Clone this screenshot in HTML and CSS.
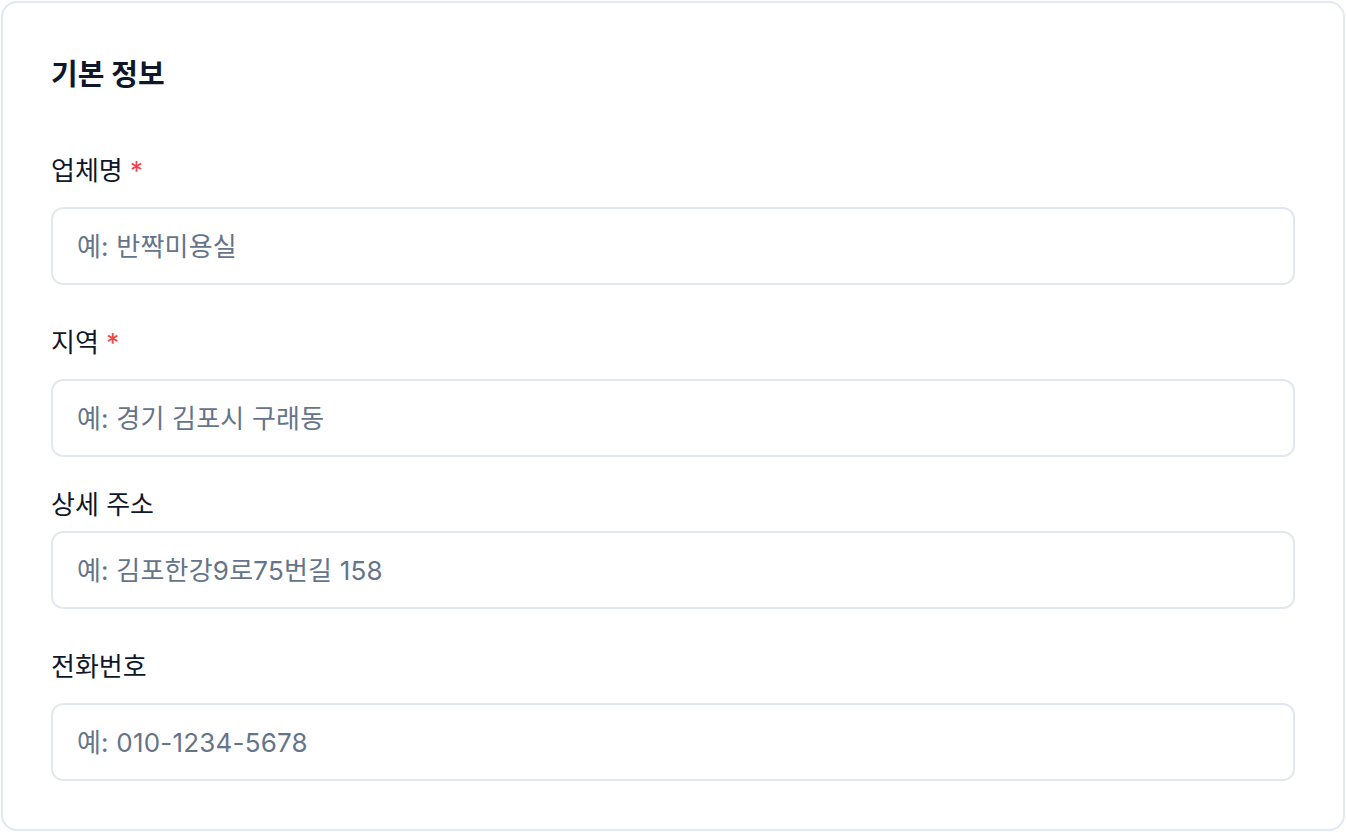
FILE: index.html
```html
<!DOCTYPE html>
<html lang="ko">
<head>
    <meta charset="UTF-8">
    <meta name="viewport" content="width=device-width, initial-scale=1.0">
    <title>기본 정보</title>
    <link rel="stylesheet" href="styles.css">
</head>
<body>
    <div class="card">
        <h2 class="card-title">기본 정보</h2>

        <div class="field">
            <label class="field-label" for="name">업체명 <span class="req">*</span></label>
            <input class="field-input" id="name" type="text" placeholder="예: 반짝미용실">
        </div>

        <div class="field">
            <label class="field-label" for="region">지역 <span class="req">*</span></label>
            <input class="field-input" id="region" type="text" placeholder="예: 경기 김포시 구래동">
        </div>

        <div class="field field-tight">
            <label class="field-label" for="address">상세 주소</label>
            <input class="field-input" id="address" type="text" placeholder="예: 김포한강9로75번길 158">
        </div>

        <div class="field">
            <label class="field-label" for="phone">전화번호</label>
            <input class="field-input" id="phone" type="text" placeholder="예: 010-1234-5678">
        </div>
    </div>
</body>
</html>
```

FILE: styles.css
```css
body { margin: 0; padding: 1px; background: #fff; font-family: Inter, "Noto Sans CJK KR", sans-serif; color: #0f172a; }
.card { border: 2px solid #e2e8f0; border-radius: 16px; padding: 48px; background: #fff; }
.card-title { margin: 8px 0 66px; font-size: 29px; line-height: 32px; font-weight: 700; }
.field { margin-top: 44px; }
.card-title + .field { margin-top: 0; }
.field-label { display: block; margin-bottom: 22px; font-size: 26px; line-height: 28px; font-weight: 400; }
.req { color: #ef4444; }
.field-input { display: block; box-sizing: border-box; width: 100%; height: 78px; padding: 0 24px; border: 2px solid #e2e8f0; border-radius: 12px; font-family: inherit; font-size: 26px; letter-spacing: 0.2px; color: #0f172a; outline: none; }
.field-input::placeholder { color: #64748b; }
.field-tight { margin-top: 34px; }
.field-tight .field-label { margin-bottom: 12px; }
```
